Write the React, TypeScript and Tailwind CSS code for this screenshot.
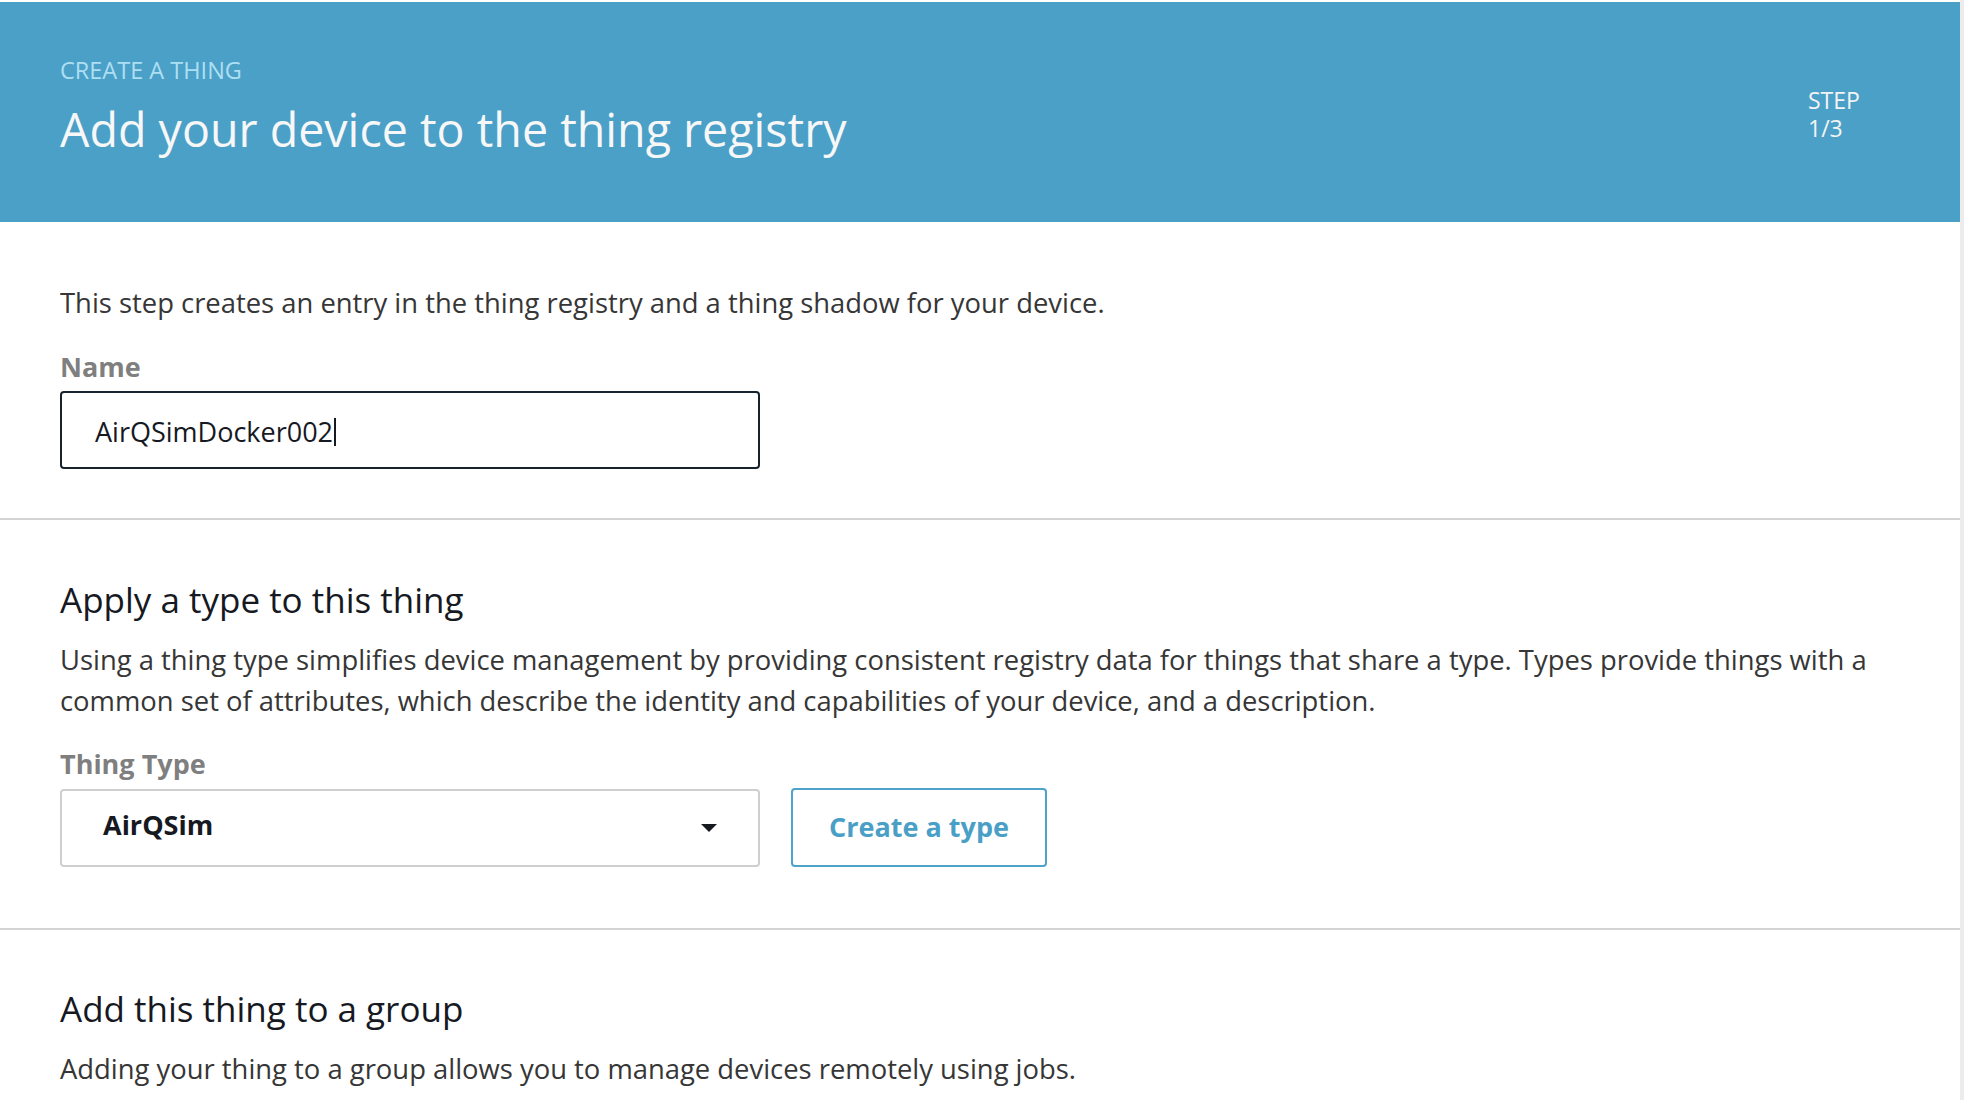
import { useState } from 'react';

const SECTION_RULE = 'h-[2px] w-full bg-[#d4d4d4]';

function CaretDown() {
  return (
    <svg width="16" height="8" viewBox="0 0 16 8" className="shrink-0">
      <path d="M0 0 L16 0 L8 8 Z" fill="#16191f" />
    </svg>
  );
}

function Header() {
  return (
    <header className="flex h-[220px] justify-between bg-[#4ba0c8] px-[60px]">
      <div className="pt-[53px]">
        <p className="text-[23.5px] leading-[30px] text-[#addff2]">CREATE A THING</p>
        <h1 className="mt-[16px] text-[46.6px] leading-[56px] text-[#f7f7f7]">
          Add your device to the thing registry
        </h1>
      </div>
      <div className="w-[92px] pt-[84px] text-[23px] text-[#f4f4f4]">
        <p className="leading-[28px]">STEP</p>
        <p className="leading-[28px]">1/3</p>
      </div>
    </header>
  );
}

export default function App() {
  const [name] = useState('AirQSimDocker002');

  return (
    <div className="flex min-h-screen bg-white font-['Open_Sans',sans-serif]">
      <div className="w-[1960px] pt-[2px]">
        <Header />

        <section className="px-[60px] pt-[61px] pb-[49px]">
          <p className="text-[27.4px] leading-[40px] text-[#363636]">
            This step creates an entry in the thing registry and a thing shadow for your device.
          </p>
          <label className="mt-[27px] block text-[27px] font-bold leading-[34px] text-[#7f7f7f]">Name</label>
          <div className="mt-[7px] flex h-[78px] w-[700px] items-center rounded-[4px] border-2 border-[#16232d] pt-[4px] pl-[33px]">
            <span className="text-[27px] text-[#16191f]">{name}</span>
            <span className="ml-[1px] h-[28px] w-[2px] bg-[#16191f]" />
          </div>
        </section>

        <div className={SECTION_RULE} />

        <section className="px-[60px] pt-[58px] pb-[61px]">
          <h2 className="text-[35px] leading-[44px] text-[#16191f]">Apply a type to this thing</h2>
          <p className="mt-[17px] text-[27.4px] leading-[41px] text-[#363636]">
            Using a thing type simplifies device management by providing consistent registry data for things that
            share a type. Types provide things with a common set of attributes, which describe the identity and
            capabilities of your device, and a description.
          </p>
          <label className="mt-[26px] block text-[27px] font-bold leading-[34px] text-[#7f7f7f]">Thing Type</label>
          <div className="mt-[7px] flex items-center gap-[31px]">
            <div className="flex h-[78px] w-[700px] items-center justify-between rounded-[4px] border-2 border-[#cfcfcf] pr-[41px] pb-[5px] pl-[41px]">
              <span className="text-[27px] font-bold text-[#16191f]">AirQSim</span>
              <span className="pt-[5px]">
                <CaretDown />
              </span>
            </div>
            <button className="h-[79px] w-[256px] rounded-[4px] border-2 border-[#4ea3ca] text-[27px] font-bold text-[#4a9fc7]">
              Create a type
            </button>
          </div>
        </section>

        <div className={SECTION_RULE} />

        <section className="px-[60px] pt-[57px] pb-[40px]">
          <h2 className="text-[35px] leading-[44px] text-[#16191f]">Add this thing to a group</h2>
          <p className="mt-[18px] text-[27.4px] leading-[40px] text-[#363636]">
            Adding your thing to a group allows you to manage devices remotely using jobs.
          </p>
        </section>
      </div>
      <div className="w-[4px] shrink-0 bg-[#ececec]" />
    </div>
  );
}
